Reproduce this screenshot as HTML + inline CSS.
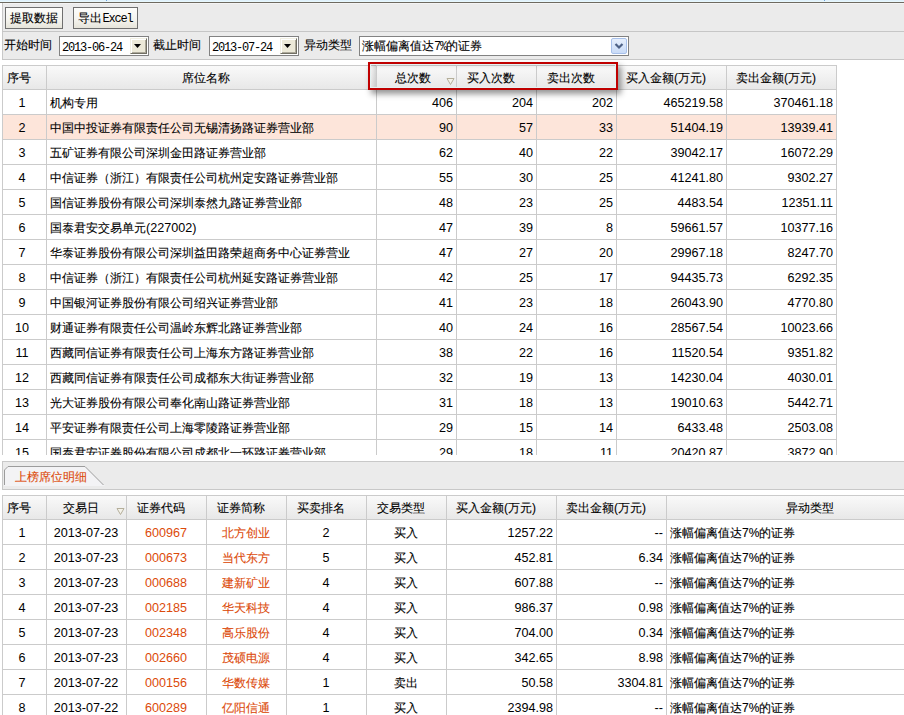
<!DOCTYPE html>
<html><head><meta charset="utf-8"><style>
*{margin:0;padding:0;box-sizing:border-box}
html,body{width:904px;height:715px;overflow:hidden;background:#fff}
body{position:relative;font-family:"Liberation Sans",sans-serif;font-size:12px;color:#000}
.a{position:absolute}
.t{position:absolute;white-space:nowrap;line-height:14px;height:14px;-webkit-text-stroke:0.1px currentColor}
.btn{position:absolute;border:1px solid #6f6f6f;background:linear-gradient(#fdfdfb,#f4f3ee 60%,#e6e4da);}
.hd{position:absolute;background:linear-gradient(#fafafa,#e7e7e7)}
.vl{position:absolute;width:1px;background:#cbcbcb}
.hl{position:absolute;height:1px;background:#cbcbcb}
.mono{font-family:"Liberation Mono",monospace;letter-spacing:-1.2px;-webkit-text-stroke:0}
.r{text-align:right}
.n{font-size:12.6px;-webkit-text-stroke:0}
.k{}
.c{text-align:center}
.or{color:#dc4a0a}
</style></head><body>
<div class="a" style="left:0;top:0;width:904px;height:1px;background:#e0f1fb"></div>
<div class="a" style="left:0;top:1px;width:904px;height:1px;background:#e8f8fd"></div>
<div class="a" style="left:106px;top:0;width:1px;height:1px;background:#6fa3dc"></div>
<div class="a" style="left:824px;top:0;width:1px;height:1px;background:#6fa3dc"></div>
<div class="a" style="left:0;top:2px;width:904px;height:1px;background:#6e6a60"></div>
<div class="a" style="left:2px;top:3px;width:902px;height:57px;background:#ebebeb"></div>
<div class="a" style="left:2px;top:3px;width:1px;height:57px;background:#c8c8c8"></div>
<div class="a" style="left:3px;top:3px;width:901px;height:1px;background:#f4f4f4"></div>
<div class="a" style="left:2px;top:31px;width:902px;height:1px;background:#c6c6c6"></div>
<div class="a" style="left:2px;top:59px;width:902px;height:1px;background:#c6c6c6"></div>
<div class="btn" style="left:5px;top:7px;width:58px;height:22px"></div>
<div class="t" style="left:9px;top:11px;width:50px;text-align:center">提取数据</div>
<div class="btn" style="left:73px;top:7px;width:65px;height:22px"></div>
<div class="t" style="left:77px;top:11px;width:57px;text-align:center">导出<span class="mono">Excel</span></div>
<div class="t" style="left:4px;top:38px">开始时间</div>
<div class="t" style="left:153px;top:38px">截止时间</div>
<div class="t" style="left:304px;top:38px">异动类型</div>
<div class="a" style="left:59px;top:36px;width:90px;height:20px;border:1px solid #828282;background:#fff"></div>
<div class="t mono" style="left:62px;top:41px">2013-06-24</div>
<div class="a" style="left:130px;top:38px;width:17px;height:16px;background:#ece9d8;border-top:1px solid #f1efe2;border-left:1px solid #f1efe2;border-right:1px solid #716f64;border-bottom:1px solid #716f64;box-shadow:inset 1px 1px 0 #fff, inset -1px -1px 0 #aca899"></div>
<svg class="a" style="left:134px;top:44px" width="8" height="5"><path d="M0 0 H7 L3.5 4 Z" fill="#000"/></svg>
<div class="a" style="left:209px;top:36px;width:90px;height:20px;border:1px solid #828282;background:#fff"></div>
<div class="t mono" style="left:212px;top:41px">2013-07-24</div>
<div class="a" style="left:280px;top:38px;width:17px;height:16px;background:#ece9d8;border-top:1px solid #f1efe2;border-left:1px solid #f1efe2;border-right:1px solid #716f64;border-bottom:1px solid #716f64;box-shadow:inset 1px 1px 0 #fff, inset -1px -1px 0 #aca899"></div>
<svg class="a" style="left:284px;top:44px" width="8" height="5"><path d="M0 0 H7 L3.5 4 Z" fill="#000"/></svg>
<div class="a" style="left:359px;top:36px;width:270px;height:20px;border:1px solid #828282;background:#fff"></div>
<div class="t" style="left:362px;top:39px">涨幅偏离值达<span class="mono">7%</span>的证券</div>
<div class="a" style="left:611px;top:38px;width:16px;height:16px;border:1px solid #a7c0ea;border-radius:2px;background:linear-gradient(#e6effc,#c9dbf7)"></div>
<svg class="a" style="left:611px;top:38px" width="16" height="16"><path d="M4.5 6 L8 9.5 L11.5 6" stroke="#4d6185" stroke-width="2.2" fill="none"/></svg>
<div class="a" style="left:0;top:60px;width:904px;height:401px;background:#fff"></div>
<div class="hd" style="left:2px;top:65px;width:834px;height:25px"></div>
<div class="a" style="left:2px;top:114px;width:834px;height:25px;background:#fde5da"></div>
<div class="hl" style="left:2px;top:65px;width:835px"></div>
<div class="hl" style="left:2px;top:89px;width:835px"></div>
<div class="hl" style="left:2px;top:114px;width:835px"></div>
<div class="hl" style="left:2px;top:139px;width:835px"></div>
<div class="hl" style="left:2px;top:164px;width:835px"></div>
<div class="hl" style="left:2px;top:189px;width:835px"></div>
<div class="hl" style="left:2px;top:214px;width:835px"></div>
<div class="hl" style="left:2px;top:239px;width:835px"></div>
<div class="hl" style="left:2px;top:264px;width:835px"></div>
<div class="hl" style="left:2px;top:289px;width:835px"></div>
<div class="hl" style="left:2px;top:314px;width:835px"></div>
<div class="hl" style="left:2px;top:339px;width:835px"></div>
<div class="hl" style="left:2px;top:364px;width:835px"></div>
<div class="hl" style="left:2px;top:389px;width:835px"></div>
<div class="hl" style="left:2px;top:414px;width:835px"></div>
<div class="hl" style="left:2px;top:439px;width:835px"></div>
<div class="vl" style="left:2px;top:65px;height:390px"></div>
<div class="vl" style="left:46px;top:65px;height:390px"></div>
<div class="vl" style="left:376px;top:65px;height:390px"></div>
<div class="vl" style="left:456px;top:65px;height:390px"></div>
<div class="vl" style="left:536px;top:65px;height:390px"></div>
<div class="vl" style="left:616px;top:65px;height:390px"></div>
<div class="vl" style="left:726px;top:65px;height:390px"></div>
<div class="vl" style="left:836px;top:65px;height:390px"></div>
<div class="t" style="left:7px;top:71px">序号</div>
<div class="t c" style="left:46px;top:71px;width:320px">席位名称</div>
<div class="t c" style="left:378px;top:71px;width:70px">总次数</div>
<div class="t c" style="left:456px;top:71px;width:70px">买入次数</div>
<div class="t c" style="left:536px;top:71px;width:70px">卖出次数</div>
<div class="t c" style="left:616px;top:71px;width:100px">买入金额(万元)</div>
<div class="t c" style="left:726px;top:71px;width:100px">卖出金额(万元)</div>
<svg class="a" style="left:446px;top:77px" width="9" height="9"><path d="M1 1.5 H8 L4.5 7.5 Z" fill="#f4f2ea" stroke="#b4ae9a" stroke-width="1"/></svg>
<div class="a" style="left:0;top:0;width:904px;height:455px;overflow:hidden">
<div class="t c n" style="left:0px;top:96px;width:44px">1</div>
<div class="t k" style="left:50px;top:96px">机构专用</div>
<div class="t r n" style="left:376px;top:96px;width:77px">406</div>
<div class="t r n" style="left:456px;top:96px;width:77px">204</div>
<div class="t r n" style="left:536px;top:96px;width:77px">202</div>
<div class="t r n" style="left:616px;top:96px;width:107px">465219.58</div>
<div class="t r n" style="left:726px;top:96px;width:107px">370461.18</div>
<div class="t c n" style="left:0px;top:121px;width:44px">2</div>
<div class="t k" style="left:50px;top:121px">中国中投证券有限责任公司无锡清扬路证券营业部</div>
<div class="t r n" style="left:376px;top:121px;width:77px">90</div>
<div class="t r n" style="left:456px;top:121px;width:77px">57</div>
<div class="t r n" style="left:536px;top:121px;width:77px">33</div>
<div class="t r n" style="left:616px;top:121px;width:107px">51404.19</div>
<div class="t r n" style="left:726px;top:121px;width:107px">13939.41</div>
<div class="t c n" style="left:0px;top:146px;width:44px">3</div>
<div class="t k" style="left:50px;top:146px">五矿证券有限公司深圳金田路证券营业部</div>
<div class="t r n" style="left:376px;top:146px;width:77px">62</div>
<div class="t r n" style="left:456px;top:146px;width:77px">40</div>
<div class="t r n" style="left:536px;top:146px;width:77px">22</div>
<div class="t r n" style="left:616px;top:146px;width:107px">39042.17</div>
<div class="t r n" style="left:726px;top:146px;width:107px">16072.29</div>
<div class="t c n" style="left:0px;top:171px;width:44px">4</div>
<div class="t k" style="left:50px;top:171px">中信证券（浙江）有限责任公司杭州定安路证券营业部</div>
<div class="t r n" style="left:376px;top:171px;width:77px">55</div>
<div class="t r n" style="left:456px;top:171px;width:77px">30</div>
<div class="t r n" style="left:536px;top:171px;width:77px">25</div>
<div class="t r n" style="left:616px;top:171px;width:107px">41241.80</div>
<div class="t r n" style="left:726px;top:171px;width:107px">9302.27</div>
<div class="t c n" style="left:0px;top:196px;width:44px">5</div>
<div class="t k" style="left:50px;top:196px">国信证券股份有限公司深圳泰然九路证券营业部</div>
<div class="t r n" style="left:376px;top:196px;width:77px">48</div>
<div class="t r n" style="left:456px;top:196px;width:77px">23</div>
<div class="t r n" style="left:536px;top:196px;width:77px">25</div>
<div class="t r n" style="left:616px;top:196px;width:107px">4483.54</div>
<div class="t r n" style="left:726px;top:196px;width:107px">12351.11</div>
<div class="t c n" style="left:0px;top:221px;width:44px">6</div>
<div class="t k" style="left:50px;top:221px">国泰君安交易单元<span class="n">(227002)</span></div>
<div class="t r n" style="left:376px;top:221px;width:77px">47</div>
<div class="t r n" style="left:456px;top:221px;width:77px">39</div>
<div class="t r n" style="left:536px;top:221px;width:77px">8</div>
<div class="t r n" style="left:616px;top:221px;width:107px">59661.57</div>
<div class="t r n" style="left:726px;top:221px;width:107px">10377.16</div>
<div class="t c n" style="left:0px;top:246px;width:44px">7</div>
<div class="t k" style="left:50px;top:246px">华泰证券股份有限公司深圳益田路荣超商务中心证券营业</div>
<div class="t r n" style="left:376px;top:246px;width:77px">47</div>
<div class="t r n" style="left:456px;top:246px;width:77px">27</div>
<div class="t r n" style="left:536px;top:246px;width:77px">20</div>
<div class="t r n" style="left:616px;top:246px;width:107px">29967.18</div>
<div class="t r n" style="left:726px;top:246px;width:107px">8247.70</div>
<div class="t c n" style="left:0px;top:271px;width:44px">8</div>
<div class="t k" style="left:50px;top:271px">中信证券（浙江）有限责任公司杭州延安路证券营业部</div>
<div class="t r n" style="left:376px;top:271px;width:77px">42</div>
<div class="t r n" style="left:456px;top:271px;width:77px">25</div>
<div class="t r n" style="left:536px;top:271px;width:77px">17</div>
<div class="t r n" style="left:616px;top:271px;width:107px">94435.73</div>
<div class="t r n" style="left:726px;top:271px;width:107px">6292.35</div>
<div class="t c n" style="left:0px;top:296px;width:44px">9</div>
<div class="t k" style="left:50px;top:296px">中国银河证券股份有限公司绍兴证券营业部</div>
<div class="t r n" style="left:376px;top:296px;width:77px">41</div>
<div class="t r n" style="left:456px;top:296px;width:77px">23</div>
<div class="t r n" style="left:536px;top:296px;width:77px">18</div>
<div class="t r n" style="left:616px;top:296px;width:107px">26043.90</div>
<div class="t r n" style="left:726px;top:296px;width:107px">4770.80</div>
<div class="t c n" style="left:0px;top:321px;width:44px">10</div>
<div class="t k" style="left:50px;top:321px">财通证券有限责任公司温岭东辉北路证券营业部</div>
<div class="t r n" style="left:376px;top:321px;width:77px">40</div>
<div class="t r n" style="left:456px;top:321px;width:77px">24</div>
<div class="t r n" style="left:536px;top:321px;width:77px">16</div>
<div class="t r n" style="left:616px;top:321px;width:107px">28567.54</div>
<div class="t r n" style="left:726px;top:321px;width:107px">10023.66</div>
<div class="t c n" style="left:0px;top:346px;width:44px">11</div>
<div class="t k" style="left:50px;top:346px">西藏同信证券有限责任公司上海东方路证券营业部</div>
<div class="t r n" style="left:376px;top:346px;width:77px">38</div>
<div class="t r n" style="left:456px;top:346px;width:77px">22</div>
<div class="t r n" style="left:536px;top:346px;width:77px">16</div>
<div class="t r n" style="left:616px;top:346px;width:107px">11520.54</div>
<div class="t r n" style="left:726px;top:346px;width:107px">9351.82</div>
<div class="t c n" style="left:0px;top:371px;width:44px">12</div>
<div class="t k" style="left:50px;top:371px">西藏同信证券有限责任公司成都东大街证券营业部</div>
<div class="t r n" style="left:376px;top:371px;width:77px">32</div>
<div class="t r n" style="left:456px;top:371px;width:77px">19</div>
<div class="t r n" style="left:536px;top:371px;width:77px">13</div>
<div class="t r n" style="left:616px;top:371px;width:107px">14230.04</div>
<div class="t r n" style="left:726px;top:371px;width:107px">4030.01</div>
<div class="t c n" style="left:0px;top:396px;width:44px">13</div>
<div class="t k" style="left:50px;top:396px">光大证券股份有限公司奉化南山路证券营业部</div>
<div class="t r n" style="left:376px;top:396px;width:77px">31</div>
<div class="t r n" style="left:456px;top:396px;width:77px">18</div>
<div class="t r n" style="left:536px;top:396px;width:77px">13</div>
<div class="t r n" style="left:616px;top:396px;width:107px">19010.63</div>
<div class="t r n" style="left:726px;top:396px;width:107px">5442.71</div>
<div class="t c n" style="left:0px;top:421px;width:44px">14</div>
<div class="t k" style="left:50px;top:421px">平安证券有限责任公司上海零陵路证券营业部</div>
<div class="t r n" style="left:376px;top:421px;width:77px">29</div>
<div class="t r n" style="left:456px;top:421px;width:77px">15</div>
<div class="t r n" style="left:536px;top:421px;width:77px">14</div>
<div class="t r n" style="left:616px;top:421px;width:107px">6433.48</div>
<div class="t r n" style="left:726px;top:421px;width:107px">2503.08</div>
<div class="t c n" style="left:0px;top:446px;width:44px">15</div>
<div class="t k" style="left:50px;top:446px">国泰君安证券股份有限公司成都北一环路证券营业部</div>
<div class="t r n" style="left:376px;top:446px;width:77px">29</div>
<div class="t r n" style="left:456px;top:446px;width:77px">18</div>
<div class="t r n" style="left:536px;top:446px;width:77px">11</div>
<div class="t r n" style="left:616px;top:446px;width:107px">20420.87</div>
<div class="t r n" style="left:726px;top:446px;width:107px">3872.90</div>
</div>
<div class="a" style="left:370px;top:64px;width:6px;height:24px;background:linear-gradient(to right,rgba(0,0,0,0),rgba(0,0,0,0.13))"></div>
<div class="a" style="left:368px;top:62px;width:250px;height:28px;border:2px solid #c00000;box-shadow:3px 4px 6px rgba(0,0,0,0.42), inset 0 0 0 1px #e4f2f2, inset 0 5px 4px -3px rgba(0,0,0,0.10)"></div>
<div class="a" style="left:2px;top:461px;width:902px;height:29px;background:#ebebeb;border-top:1px solid #c8c8c8;border-left:1px solid #c8c8c8;border-bottom:1px solid #c8c8c8"></div>
<svg class="a" style="left:0;top:460px" width="120" height="30"><path d="M4 26 V10 L8 6 H85 L105 26 Z" fill="#f3f3f5"/><path d="M4.5 25 V10 L8 6.5 H85 L103.5 25" fill="none" stroke="#9c9c9c" stroke-width="1"/></svg>
<div class="t or" style="left:15px;top:470px;">上榜席位明细</div>
<div class="hd" style="left:2px;top:495px;width:902px;height:25px"></div>
<div class="hl" style="left:2px;top:495px;width:902px"></div>
<div class="hl" style="left:2px;top:519px;width:902px"></div>
<div class="hl" style="left:2px;top:544px;width:902px"></div>
<div class="hl" style="left:2px;top:569px;width:902px"></div>
<div class="hl" style="left:2px;top:594px;width:902px"></div>
<div class="hl" style="left:2px;top:619px;width:902px"></div>
<div class="hl" style="left:2px;top:644px;width:902px"></div>
<div class="hl" style="left:2px;top:669px;width:902px"></div>
<div class="hl" style="left:2px;top:694px;width:902px"></div>
<div class="hl" style="left:2px;top:719px;width:902px"></div>
<div class="vl" style="left:2px;top:495px;height:220px"></div>
<div class="vl" style="left:46px;top:495px;height:220px"></div>
<div class="vl" style="left:126px;top:495px;height:220px"></div>
<div class="vl" style="left:206px;top:495px;height:220px"></div>
<div class="vl" style="left:286px;top:495px;height:220px"></div>
<div class="vl" style="left:366px;top:495px;height:220px"></div>
<div class="vl" style="left:446px;top:495px;height:220px"></div>
<div class="vl" style="left:556px;top:495px;height:220px"></div>
<div class="vl" style="left:666px;top:495px;height:220px"></div>
<div class="t" style="left:7px;top:501px">序号</div>
<div class="t c" style="left:46px;top:501px;width:70px">交易日</div>
<div class="t c" style="left:126px;top:501px;width:70px">证券代码</div>
<div class="t c" style="left:206px;top:501px;width:70px">证券简称</div>
<div class="t c" style="left:286px;top:501px;width:70px">买卖排名</div>
<div class="t c" style="left:366px;top:501px;width:70px">交易类型</div>
<div class="t c" style="left:446px;top:501px;width:100px">买入金额(万元)</div>
<div class="t c" style="left:556px;top:501px;width:100px">卖出金额(万元)</div>
<div class="t" style="left:786px;top:501px">异动类型</div>
<svg class="a" style="left:116px;top:507px" width="9" height="9"><path d="M1 1.5 H8 L4.5 7.5 Z" fill="#f4f2ea" stroke="#b4ae9a" stroke-width="1"/></svg>
<div class="t c n" style="left:0px;top:526px;width:44px">1</div>
<div class="t c n" style="left:46px;top:526px;width:80px">2013-07-23</div>
<div class="t c n or" style="left:126px;top:526px;width:80px">600967</div>
<div class="t c or" style="left:206px;top:526px;width:80px">北方创业</div>
<div class="t c n" style="left:286px;top:526px;width:80px">2</div>
<div class="t c k" style="left:366px;top:526px;width:80px">买入</div>
<div class="t r n" style="left:446px;top:526px;width:107px">1257.22</div>
<div class="t r n" style="left:556px;top:526px;width:107px">--</div>
<div class="t k" style="left:670px;top:526px">涨幅偏离值达7%的证券</div>
<div class="t c n" style="left:0px;top:551px;width:44px">2</div>
<div class="t c n" style="left:46px;top:551px;width:80px">2013-07-23</div>
<div class="t c n or" style="left:126px;top:551px;width:80px">000673</div>
<div class="t c or" style="left:206px;top:551px;width:80px">当代东方</div>
<div class="t c n" style="left:286px;top:551px;width:80px">5</div>
<div class="t c k" style="left:366px;top:551px;width:80px">买入</div>
<div class="t r n" style="left:446px;top:551px;width:107px">452.81</div>
<div class="t r n" style="left:556px;top:551px;width:107px">6.34</div>
<div class="t k" style="left:670px;top:551px">涨幅偏离值达7%的证券</div>
<div class="t c n" style="left:0px;top:576px;width:44px">3</div>
<div class="t c n" style="left:46px;top:576px;width:80px">2013-07-23</div>
<div class="t c n or" style="left:126px;top:576px;width:80px">000688</div>
<div class="t c or" style="left:206px;top:576px;width:80px">建新矿业</div>
<div class="t c n" style="left:286px;top:576px;width:80px">4</div>
<div class="t c k" style="left:366px;top:576px;width:80px">买入</div>
<div class="t r n" style="left:446px;top:576px;width:107px">607.88</div>
<div class="t r n" style="left:556px;top:576px;width:107px">--</div>
<div class="t k" style="left:670px;top:576px">涨幅偏离值达7%的证券</div>
<div class="t c n" style="left:0px;top:601px;width:44px">4</div>
<div class="t c n" style="left:46px;top:601px;width:80px">2013-07-23</div>
<div class="t c n or" style="left:126px;top:601px;width:80px">002185</div>
<div class="t c or" style="left:206px;top:601px;width:80px">华天科技</div>
<div class="t c n" style="left:286px;top:601px;width:80px">4</div>
<div class="t c k" style="left:366px;top:601px;width:80px">买入</div>
<div class="t r n" style="left:446px;top:601px;width:107px">986.37</div>
<div class="t r n" style="left:556px;top:601px;width:107px">0.98</div>
<div class="t k" style="left:670px;top:601px">涨幅偏离值达7%的证券</div>
<div class="t c n" style="left:0px;top:626px;width:44px">5</div>
<div class="t c n" style="left:46px;top:626px;width:80px">2013-07-23</div>
<div class="t c n or" style="left:126px;top:626px;width:80px">002348</div>
<div class="t c or" style="left:206px;top:626px;width:80px">高乐股份</div>
<div class="t c n" style="left:286px;top:626px;width:80px">4</div>
<div class="t c k" style="left:366px;top:626px;width:80px">买入</div>
<div class="t r n" style="left:446px;top:626px;width:107px">704.00</div>
<div class="t r n" style="left:556px;top:626px;width:107px">0.34</div>
<div class="t k" style="left:670px;top:626px">涨幅偏离值达7%的证券</div>
<div class="t c n" style="left:0px;top:651px;width:44px">6</div>
<div class="t c n" style="left:46px;top:651px;width:80px">2013-07-23</div>
<div class="t c n or" style="left:126px;top:651px;width:80px">002660</div>
<div class="t c or" style="left:206px;top:651px;width:80px">茂硕电源</div>
<div class="t c n" style="left:286px;top:651px;width:80px">4</div>
<div class="t c k" style="left:366px;top:651px;width:80px">买入</div>
<div class="t r n" style="left:446px;top:651px;width:107px">342.65</div>
<div class="t r n" style="left:556px;top:651px;width:107px">8.98</div>
<div class="t k" style="left:670px;top:651px">涨幅偏离值达7%的证券</div>
<div class="t c n" style="left:0px;top:676px;width:44px">7</div>
<div class="t c n" style="left:46px;top:676px;width:80px">2013-07-22</div>
<div class="t c n or" style="left:126px;top:676px;width:80px">000156</div>
<div class="t c or" style="left:206px;top:676px;width:80px">华数传媒</div>
<div class="t c n" style="left:286px;top:676px;width:80px">1</div>
<div class="t c k" style="left:366px;top:676px;width:80px">卖出</div>
<div class="t r n" style="left:446px;top:676px;width:107px">50.58</div>
<div class="t r n" style="left:556px;top:676px;width:107px">3304.81</div>
<div class="t k" style="left:670px;top:676px">涨幅偏离值达7%的证券</div>
<div class="t c n" style="left:0px;top:701px;width:44px">8</div>
<div class="t c n" style="left:46px;top:701px;width:80px">2013-07-22</div>
<div class="t c n or" style="left:126px;top:701px;width:80px">600289</div>
<div class="t c or" style="left:206px;top:701px;width:80px">亿阳信通</div>
<div class="t c n" style="left:286px;top:701px;width:80px">1</div>
<div class="t c k" style="left:366px;top:701px;width:80px">买入</div>
<div class="t r n" style="left:446px;top:701px;width:107px">2394.98</div>
<div class="t r n" style="left:556px;top:701px;width:107px">--</div>
<div class="t k" style="left:670px;top:701px">涨幅偏离值达7%的证券</div>
<div class="a" style="left:0;top:3px;width:2px;height:712px;background:#fff"></div>
</body></html>
